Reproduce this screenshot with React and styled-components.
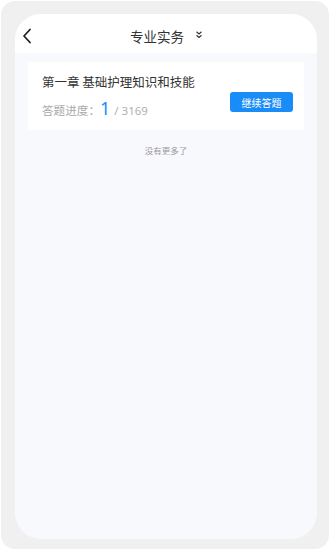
import React from 'react';
import styled, { createGlobalStyle } from 'styled-components';

const GlobalStyle = createGlobalStyle`
    * { box-sizing: border-box; }
    html, body { margin: 0; padding: 0; background: #ffffff; }
    body {
        font-family: "Noto Sans CJK SC", "Noto Sans", sans-serif;
        width: 330px;
        height: 550px;
    }
`;

const Frame = styled.div`
    width: 330px;
    height: 550px;
    padding: 1px;
`;

const Shell = styled.div`
    width: 100%;
    height: 100%;
    background: #f0f0f0;
    border-radius: 14px;
    padding: 13px 12px 10px 14px;
`;

const Screen = styled.div`
    height: 100%;
    background: #f8f9fd;
    border-radius: 26px;
    overflow: hidden;
    display: flex;
    flex-direction: column;
`;

const Header = styled.header`
    height: 39px;
    background: #ffffff;
    display: flex;
    align-items: center;
    justify-content: center;
    position: relative;
    padding-top: 4px;
`;

const BackButton = styled.div`
    position: absolute;
    left: 7px;
    top: 14px;
    width: 14px;
    height: 16px;
    display: flex;
    align-items: center;
`;

const Title = styled.div`
    font-size: 13.5px;
    color: #333333;
    display: flex;
    align-items: center;
    gap: 12px;

    svg {
        margin-top: -2px;
    }
`;

const Body = styled.main`
    flex: 1;
    padding: 9px 13px 0 13px;
    display: flex;
    flex-direction: column;
`;

const Card = styled.div`
    background: #ffffff;
    height: 68px;
    padding: 10px 11px 0 14px;
    display: flex;
    flex-direction: column;
`;

const CardTitle = styled.div`
    font-size: 12.5px;
    color: #333333;
    line-height: 20px;
`;

const CardRow = styled.div`
    display: flex;
    align-items: center;
    justify-content: space-between;
    margin-top: 4px;
`;

const Progress = styled.div`
    display: flex;
    align-items: baseline;
    color: #a9a9a9;
    font-size: 11.6px;
`;

const Current = styled.span`
    color: #1a8cf7;
    font-size: 18px;
    font-family: "Noto Sans", sans-serif;
    margin: 0 4px 0 0;
`;

const Total = styled.span`
    color: #b0b0b0;
    font-size: 11.5px;
    font-family: "Noto Sans", sans-serif;
    font-weight: 400;
`;

const ContinueButton = styled.button`
    width: 63px;
    height: 20px;
    border: none;
    border-radius: 3px;
    background: #1a8cf7;
    color: #ffffff;
    font-size: 10px;
    font-family: "Noto Sans CJK SC", sans-serif;
    padding: 0;
    margin-top: -12px;
`;

const NoMore = styled.div`
    text-align: center;
    font-size: 8.5px;
    color: #9a9a9a;
    margin-top: 14px;
`;

const App = () => {
    return (
        <Frame>
            <GlobalStyle />
            <Shell>
                <Screen>
                    <Header>
                        <BackButton>
                            <svg width="10" height="16" viewBox="0 0 10 16">
                                <path d="M8 1.5 L2 8 L8 14.5" fill="none" stroke="#222" strokeWidth="1.8" strokeLinecap="round" strokeLinejoin="round" />
                            </svg>
                        </BackButton>
                        <Title>
                            专业实务
                            <svg width="6" height="8" viewBox="0 0 6 8">
                                <path d="M0.8 1 L3 3 L5.2 1 M0.8 4.5 L3 6.5 L5.2 4.5" fill="none" stroke="#333" strokeWidth="1.1" strokeLinecap="round" strokeLinejoin="round" />
                            </svg>
                        </Title>
                    </Header>
                    <Body>
                        <Card>
                            <CardTitle>第一章 基础护理知识和技能</CardTitle>
                            <CardRow>
                                <Progress>
                                    答题进度：
                                    <Current>1</Current>
                                    <Total>/ 3169</Total>
                                </Progress>
                                <ContinueButton>继续答题</ContinueButton>
                            </CardRow>
                        </Card>
                        <NoMore>没有更多了</NoMore>
                    </Body>
                </Screen>
            </Shell>
        </Frame>
    );
};

export default App;
